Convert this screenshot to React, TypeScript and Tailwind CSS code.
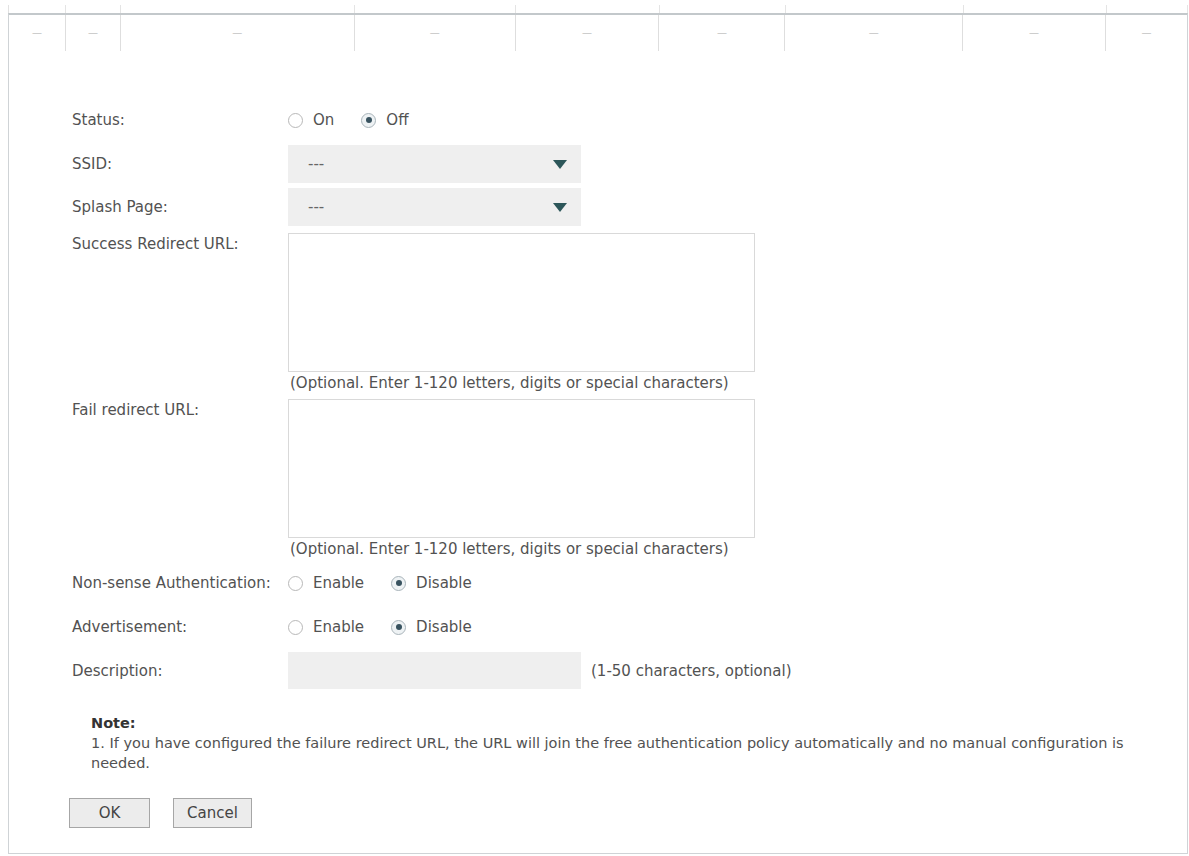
import React from 'react';

// widths of the cells in the table strip above the form
const cols = [57, 55, 234, 161, 144, 126, 178, 143, 81];

function Radio({ checked }: { checked?: boolean }) {
  return (
    <span
      className={`inline-flex h-[15px] w-[15px] items-center justify-center rounded-full border ${
        checked ? 'border-[#a9b4ba] bg-[#eef2f4]' : 'border-[#b8b8b8] bg-white'
      }`}
    >
      {checked && <span className="h-[6px] w-[6px] rounded-full bg-[#38525f]" />}
    </span>
  );
}

function RadioGroup({ a, b }: { a: string; b: string }) {
  return (
    <div className="flex h-full items-center gap-[27px]">
      <label className="flex items-center gap-[10px]">
        <Radio />
        <span>{a}</span>
      </label>
      <label className="flex items-center gap-[10px]">
        <Radio checked />
        <span>{b}</span>
      </label>
    </div>
  );
}

function Select() {
  return (
    <div className="flex h-[38px] w-[293px] items-center justify-between bg-[#efefef] pl-[20px] pr-[14px]">
      <span className="text-[#666]">---</span>
      <svg width="14" height="9" viewBox="0 0 14 9">
        <path d="M0 0 H14 L7 9 Z" fill="#2c5659" />
      </svg>
    </div>
  );
}

function Row({ label, children, className }: { label: string; children: React.ReactNode; className?: string }) {
  return (
    <div className={`flex ${className ?? ''}`}>
      <div className="w-[216px] shrink-0 whitespace-nowrap">{label}</div>
      <div className="flex-1">{children}</div>
    </div>
  );
}

function UrlField({ label }: { label: string }) {
  return (
    <Row label={label} className="[&>div:first-child]:pt-[2px]">
      <div className="h-[139px] w-[467px] border border-[#d9d9d9] bg-white" />
      <div className="ml-[2px] mt-[2px] h-[18px] leading-[18px]">
        (Optional. Enter 1-120 letters, digits or special characters)
      </div>
    </Row>
  );
}

export default function App() {
  return (
    <div
      className="h-[856px] w-[1189px] bg-white pl-[8px] pt-[5px] text-[15px] leading-[18px] text-[#525252]"
      style={{ fontFamily: '"DejaVu Sans", Verdana, sans-serif' }}
    >
      {/* clipped header strip */}
      <div className="flex h-[8px] border-l border-[#e2e2e2]">
        {cols.map((w, i) => (
          <div key={i} style={{ width: w }} className="border-r border-[#e4e4e4]" />
        ))}
      </div>

      <div className="h-[841px] w-[1180px] border-b border-l border-r border-t-2 border-[#cfd3d6] border-t-[#c3c8cb]">
        {/* table row */}
        <div className="flex h-[36px]">
          {cols.map((w, i) => (
            <div
              key={i}
              style={{ width: w }}
              className={`flex items-center justify-center text-[10px] text-[#c4c4c4] ${
                i < cols.length - 1 ? 'border-r border-[#dedede]' : ''
              }`}
            >
              —
            </div>
          ))}
        </div>

        {/* form */}
        <div className="pl-[63px] pt-[60px]">
          <Row label="Status:" className="h-[18px] items-center">
            <RadioGroup a="On" b="Off" />
          </Row>

          <Row label="SSID:" className="mt-[16px] items-center">
            <Select />
          </Row>
          <Row label="Splash Page:" className="mt-[5px] items-center">
            <Select />
          </Row>

          <div className="mt-[7px]">
            <UrlField label="Success Redirect URL:" />
          </div>
          <div className="mt-[7px]">
            <UrlField label="Fail redirect URL:" />
          </div>

          <Row label="Non-sense Authentication:" className="mt-[16px] h-[18px] items-center">
            <RadioGroup a="Enable" b="Disable" />
          </Row>

          <Row label="Advertisement:" className="mt-[26px] h-[18px] items-center">
            <RadioGroup a="Enable" b="Disable" />
          </Row>

          <Row label="Description:" className="mt-[16px] items-center">
            <div className="flex items-center gap-[10px]">
              <div className="h-[37px] w-[293px] bg-[#efefef]" />
              <span>(1-50 characters, optional)</span>
            </div>
          </Row>

          <div className="ml-[19px] mt-[24px] text-[14.5px] leading-[20px]">
            <div className="font-bold text-[#333]">Note:</div>
            <div className="whitespace-nowrap">
              1. If you have configured the failure redirect URL, the URL will join the free authentication policy
              automatically and no manual configuration is
            </div>
            <div>needed.</div>
          </div>

          <div className="-ml-[3px] mt-[25px] flex gap-[23px]">
            <button className="h-[30px] w-[81px] border border-[#a6a6a6] bg-[#ececec] text-[#444]">OK</button>
            <button className="h-[30px] w-[79px] border border-[#a6a6a6] bg-[#ececec] text-[#444]">Cancel</button>
          </div>
        </div>
      </div>
    </div>
  );
}
